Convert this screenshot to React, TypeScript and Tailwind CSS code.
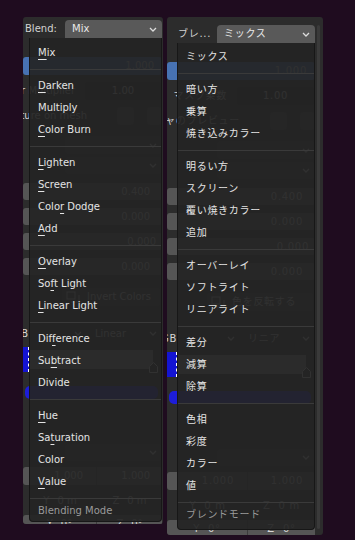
import type { ReactNode } from 'react'

type Item = { t: string; u?: number }

const enGroups: Item[][] = [
  [{ t: 'Mix', u: 0 }],
  [{ t: 'Darken', u: 0 }, { t: 'Multiply' }, { t: 'Color Burn', u: 0 }],
  [{ t: 'Lighten', u: 0 }, { t: 'Screen', u: 0 }, { t: 'Color Dodge', u: 4 }, { t: 'Add', u: 0 }],
  [{ t: 'Overlay', u: 0 }, { t: 'Soft Light', u: 2 }, { t: 'Linear Light', u: 0 }],
  [{ t: 'Difference', u: 3 }, { t: 'Subtract', u: 2 }, { t: 'Divide' }],
  [{ t: 'Hue', u: 0 }, { t: 'Saturation', u: 2 }, { t: 'Color' }, { t: 'Value', u: 0 }],
]

const jaGroups: Item[][] = [
  [{ t: 'ミックス' }],
  [{ t: '暗い方' }, { t: '乗算' }, { t: '焼き込みカラー' }],
  [{ t: '明るい方' }, { t: 'スクリーン' }, { t: '覆い焼きカラー' }, { t: '追加' }],
  [{ t: 'オーバーレイ' }, { t: 'ソフトライト' }, { t: 'リニアライト' }],
  [{ t: '差分' }, { t: '減算' }, { t: '除算' }],
  [{ t: '色相' }, { t: '彩度' }, { t: 'カラー' }, { t: '値' }],
]

const Chevron = ({ className = '' }: { className?: string }) => (
  <svg width="8" height="5" viewBox="0 0 8 5" className={className}>
    <path d="M1 1 L4 4 L7 1" fill="none" stroke="currentColor" strokeWidth="1.3" />
  </svg>
)

const Label = ({ item }: { item: Item }) => {
  if (item.u === undefined) return <>{item.t}</>
  const i = item.u
  return (
    <>
      {item.t.slice(0, i)}
      <span className="underline decoration-1 underline-offset-[3px]">{item.t[i]}</span>
      {item.t.slice(i + 1)}
    </>
  )
}

const Sep = () => (
  <div className="h-[11px] flex items-center">
    <div className="h-px w-full bg-[#3a3a3a]" />
  </div>
)

const Menu = ({
  groups,
  title,
  className,
  textClass,
}: {
  groups: Item[][]
  title: string
  className: string
  textClass: string
}) => (
  <div
    className={`absolute ${className} bg-[#232323]/[0.93] border border-t-0 border-[#171717] rounded-b-[4px] ${textClass}`}
  >
    {groups.map((g, gi) => (
      <div key={gi}>
        {gi > 0 && <Sep />}
        {g.map((it) => (
          <div key={it.t} className="h-[22px] flex items-center pl-[8px] text-[#e4e4e4] whitespace-pre">
            <Label item={it} />
          </div>
        ))}
      </div>
    ))}
    <Sep />
    <div className="h-[14px] flex items-center pl-[8px] text-[#9a9a9a]">{title}</div>
  </div>
)

type Texts = {
  blend: string
  mode: string
  multiplier: string
  preview: string
  invert: string
  linear: string
  y: string
  z: string
}

const Spacer = ({ className }: { className: string }) => <div className={`shrink-0 ${className}`} />

const Panel = ({
  t,
  panelClass,
  labelW,
  labelPad,
  multW,
  previewW,
  invertW,
  rgbW,
  blueW,
  halfW,
  menu,
  textClass,
  children,
}: {
  t: Texts
  panelClass: string
  labelW: string
  labelPad: string
  multW: string
  previewW: string
  invertW: string
  rgbW: string
  blueW: string
  halfW: string
  menu: ReactNode
  textClass: string
  children?: ReactNode
}) => (
  <div className={`relative shrink-0 overflow-hidden rounded-[3px] bg-[#2c2c2c] ${panelClass}`}>
    <div className={`flex flex-col text-[#d6d6d6] ${textClass}`}>
      {/* blend row */}
      <div className="h-[18px] flex">
        <div className={`shrink-0 flex items-center text-[#d2d2d2] ${labelW} ${labelPad}`}>{t.blend}</div>
        <div className="flex-1 flex items-center justify-between pl-[7px] pr-[5px] rounded-t-[4px] bg-[#595959] text-[#e8e8e8]">
          <span>{t.mode}</span>
          <Chevron className="text-[#dcdcdc]" />
        </div>
      </div>
      {/* strength */}
      <div className="mt-[19px] h-[18px] rounded-[3px] bg-[#4772b3] flex items-center justify-end pr-[8px]">
        1.000
      </div>
      {/* multiplier */}
      <div className="mt-[7px] h-[18px] flex">
        <div className={`shrink-0 flex items-center justify-end overflow-hidden whitespace-nowrap pr-[10px] ${multW}`}>
          {t.multiplier}
        </div>
        <div className="flex-1 flex items-center justify-center rounded-[3px] bg-[#262626] mr-[1px]">
          1.00
        </div>
      </div>
      {/* preview */}
      <div className="mt-[7px] h-[18px] flex">
        <div className={`shrink-0 flex items-center justify-end overflow-hidden whitespace-nowrap pr-[30px] ${previewW}`}>
          {t.preview}
        </div>
        <div className="w-[17px] shrink-0 rounded-[3px] bg-[#444444]" />
        <Spacer className="w-[13px]" />
        <div className="flex-1 rounded-[3px] bg-[#444444]" />
      </div>
      {/* dropdowns */}
      <div className="mt-[11px] h-[18px] flex">
        <Spacer className={labelW} />
        <div className="flex-1 flex items-center justify-end pr-[5px] rounded-[3px] bg-[#3a3a3a]">
          <Chevron />
        </div>
      </div>
      <div className="mt-[3px] h-[17px] flex">
        <Spacer className={labelW} />
        <div className="flex-1 flex items-center justify-end pr-[5px] rounded-[3px] bg-[#3a3a3a]">
          <Chevron />
        </div>
      </div>
      {/* number sliders */}
      <div className="mt-[9px] h-[17px] rounded-[3px] bg-[#555555] flex items-center justify-end pr-[12px]">0.400</div>
      <div className="mt-[8px] h-[17px] rounded-[3px] bg-[#555555] flex items-center justify-end pr-[12px]">0.000</div>
      <div className="mt-[8px] h-[17px] rounded-[3px] bg-[#555555] flex items-center justify-end pr-[6px]">0.000</div>
      <div className="mt-[8px] h-[17px] rounded-[3px] bg-[#555555] flex items-center justify-end pr-[12px]">0.000</div>
      {/* invert */}
      <div className="mt-[13px] h-[18px] flex">
        <Spacer className={invertW} />
        <div className="flex-1 flex items-center pl-[4px] gap-[7px] rounded-[3px] bg-[#3d3d3d] mr-[2px]">
          <svg width="14" height="12" viewBox="0 0 14 12" className="shrink-0">
            <rect x="1" y="1" width="8" height="7" fill="none" stroke="#cfcfcf" strokeWidth="1" />
            <path d="M5 11 H13 V4" fill="none" stroke="#cfcfcf" strokeWidth="1" />
          </svg>
          <span className="whitespace-nowrap">{t.invert}</span>
        </div>
      </div>
      {/* rgb / linear */}
      <div className="mt-[19px] h-[17px] flex">
        <div className={`shrink-0 flex items-center justify-end overflow-hidden ${rgbW}`}>RGB</div>
        <div className="flex-1 flex items-center justify-end pr-[4px]">
          <Chevron />
        </div>
        <div className="w-[76px] shrink-0 flex items-center justify-between pl-[9px] pr-[5px]">
          <span>{t.linear}</span>
          <Chevron />
        </div>
      </div>
      {/* color ramp */}
      <div className="mt-[5px] h-[25px] flex">
        <div className={`shrink-0 bg-[#1414d2] border-r border-dashed border-white ${blueW}`} />
        <div className="relative flex-1 mt-[3px] h-[19px] bg-[#8a8a8a] mr-[9px]">
          <svg width="9" height="11" viewBox="0 0 9 11" className="absolute right-[-5px] bottom-[-4px]">
            <path d="M4.5 0.5 L8.5 4.5 V10.5 H0.5 V4.5 Z" fill="#2a2a2a" stroke="#d8d8d8" strokeWidth="1" />
          </svg>
        </div>
      </div>
      {/* swatch */}
      <div className="mt-[14px] h-[13px] flex pl-[2px] pr-[4px]">
        <div className="flex-1 rounded-[5px] bg-[#1d1dd8]" />
      </div>
      {/* bottom dropdown */}
      <div className="mt-[45px] h-[17px] flex">
        <Spacer className={labelW} />
        <div className="flex-1 flex items-center justify-end pr-[5px] rounded-[3px] bg-[#3a3a3a]">
          <Chevron />
        </div>
      </div>
      {/* vector */}
      <div className="mt-[6px] h-[18px] flex rounded-[3px] overflow-hidden bg-[#555555]">
        <div className={`shrink-0 flex items-center justify-end pr-[13px] border-r border-[#3c3c3c] ${halfW}`}>1.000</div>
        <div className="flex-1 flex items-center justify-end pr-[12px]">1.000</div>
      </div>
      <div className="mt-[7px] h-[17px] flex">
        <div className={`shrink-0 flex items-center justify-center gap-[8px] ${halfW}`}>
          <span>Y</span>
          <span>{t.y}</span>
        </div>
        <div className="flex-1 flex items-center justify-center gap-[8px]">
          <span>Z</span>
          <span>{t.z}</span>
        </div>
      </div>
      <div className="mt-[6px] h-[17px] flex rounded-[3px] overflow-hidden bg-[#555555]">
        <div className={`shrink-0 flex items-center justify-center gap-[8px] border-r border-[#3c3c3c] ${halfW}`}>
          <span>Y</span>
          <span>0°</span>
        </div>
        <div className="flex-1 flex items-center justify-center gap-[8px]">
          <span>Z</span>
          <span>0°</span>
        </div>
      </div>
    </div>
    {children}
    {menu}
  </div>
)

const en: Texts = {
  blend: 'Blend:',
  mode: 'Mix',
  multiplier: 'Color Multiplier',
  preview: 'Texture on mesh',
  invert: 'Invert Colors',
  linear: 'Linear',
  y: '0 m',
  z: '0 m',
}

const ja: Texts = {
  blend: 'ブレ...',
  mode: 'ミックス',
  multiplier: 'マスク乗数',
  preview: 'テクスチャのプレビュー',
  invert: '色を反転する',
  linear: 'リニア',
  y: '0 m',
  z: '0 m',
}

export default function App() {
  return (
    <div className="w-[355px] h-[540px] overflow-hidden bg-[#1f0c1f] flex items-start gap-[4px] pl-[23px] pt-[17px] font-['DejaVu_Sans','Noto_Sans_CJK_JP',sans-serif] text-[10px] leading-none">
      <Panel
        t={en}
        panelClass="w-[140px] h-[507px] pt-[3px] pr-[1px]"
        labelW="w-[42px]"
        labelPad="pl-[2px]"
        multW="w-[62px]"
        previewW="w-[94px]"
        invertW="w-[39px]"
        rgbW="w-[5px]"
        blueW="w-[6px]"
        halfW="w-[74px]"
        textClass=""
        menu={
          <Menu
            groups={enGroups}
            title="Blending Mode"
            className="left-[6px] top-[21px] w-[133px] pt-[4px] pb-[3px]"
            textClass=""
          />
        }
      />
      <Panel
        t={ja}
        panelClass="w-[156px] h-[518px] pt-[8px] pr-[8px]"
        labelW="w-[50px]"
        labelPad="pl-[11px]"
        multW="w-[70px]"
        previewW="w-[103px]"
        invertW="w-[40px]"
        rgbW="w-[10px]"
        blueW="w-[10px]"
        halfW="w-[81px]"
        textClass="tracking-[0.7px]"
        menu={
          <Menu
            groups={jaGroups}
            title="ブレンドモード"
            className="left-[10px] top-[26px] w-[138px] pt-[3px] pb-[7px]"
            textClass="tracking-[0.7px]"
          />
        }
      >
        <div className="absolute right-[3px] top-[8px] bottom-[6px] w-[3px] rounded-full bg-[#3a3a3a]" />
      </Panel>
    </div>
  )
}
